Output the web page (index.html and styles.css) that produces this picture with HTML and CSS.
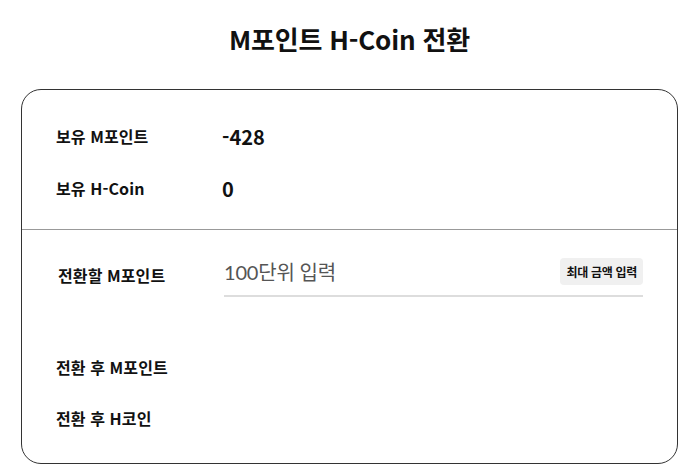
FILE: index.html
```html
<!DOCTYPE html>
<html lang="ko">
<head>
<meta charset="utf-8">
<link rel="stylesheet" href="styles.css">
</head>
<body>
<h1 class="title">M포인트 H-Coin 전환</h1>
<div class="card">
  <div class="section top">
    <div class="row">
      <span class="label">보유 M포인트</span>
      <span class="value">-428</span>
    </div>
    <div class="row">
      <span class="label">보유 H-Coin</span>
      <span class="value">0</span>
    </div>
  </div>
  <div class="section bottom">
    <div class="row input-row">
      <span class="label">전환할 M포인트</span>
      <div class="field">
        <span class="placeholder">100단위 입력</span>
        <button class="max-btn">최대 금액 입력</button>
      </div>
    </div>
    <div class="row after">
      <span class="label">전환 후 M포인트</span>
    </div>
    <div class="row">
      <span class="label">전환 후 H코인</span>
    </div>
  </div>
</div>
</body>
</html>
```
FILE: styles.css
```css
* { box-sizing: border-box; }
html, body { margin: 0; padding: 0; background: #fff; }
body {
  font-family: "Noto Sans CJK KR", "Noto Sans", sans-serif;
  color: #111;
  padding: 0 22px 0 21px;
}
.title {
  margin: 0;
  height: 89px;
  padding-top: 21px;
  text-align: center;
  font-size: 26px;
  font-weight: 700;
  line-height: 36px;
  letter-spacing: -0.2px;
}
.card {
  border: 1.5px solid #333;
  border-radius: 20px;
  height: 375px;
}
.section.top {
  padding: 20px 0 0 34px;
  height: 140px;
  border-bottom: 1px solid #999;
}
.row {
  display: flex;
  align-items: center;
  height: 52px;
}
.label {
  width: 166px;
  flex: none;
  font-size: 16px;
  font-weight: 700;
  letter-spacing: 0.1px;
}
.value {
  font-size: 20px;
  font-weight: 700;
}
.section.bottom {
  padding: 19px 34px 0 36px;
}
.input-row {
  height: 48px;
  align-items: center;
}
.input-row .label { width: 166px; margin-top: 4px; }
.field {
  flex: 1;
  display: flex;
  align-items: center;
  justify-content: space-between;
  height: 48px;
  border-bottom: 2px solid #ddd;
  padding-bottom: 2px;
}
.placeholder {
  font-family: "Lato", "Noto Sans CJK KR", sans-serif;
  font-size: 20px;
  color: #555;
  letter-spacing: -0.2px;
}
.max-btn {
  font-family: "Noto Sans CJK KR", sans-serif;
  font-size: 12px;
  font-weight: 700;
  color: #111;
  background: #f0f0f0;
  border: none;
  border-radius: 4px;
  padding: 0 6px;
  height: 27px;
  letter-spacing: -0.3px;
}
.row.after { margin-top: 44px; }
.section.bottom .row:not(.input-row) { height: 51px; margin-left: -2px; }
```
